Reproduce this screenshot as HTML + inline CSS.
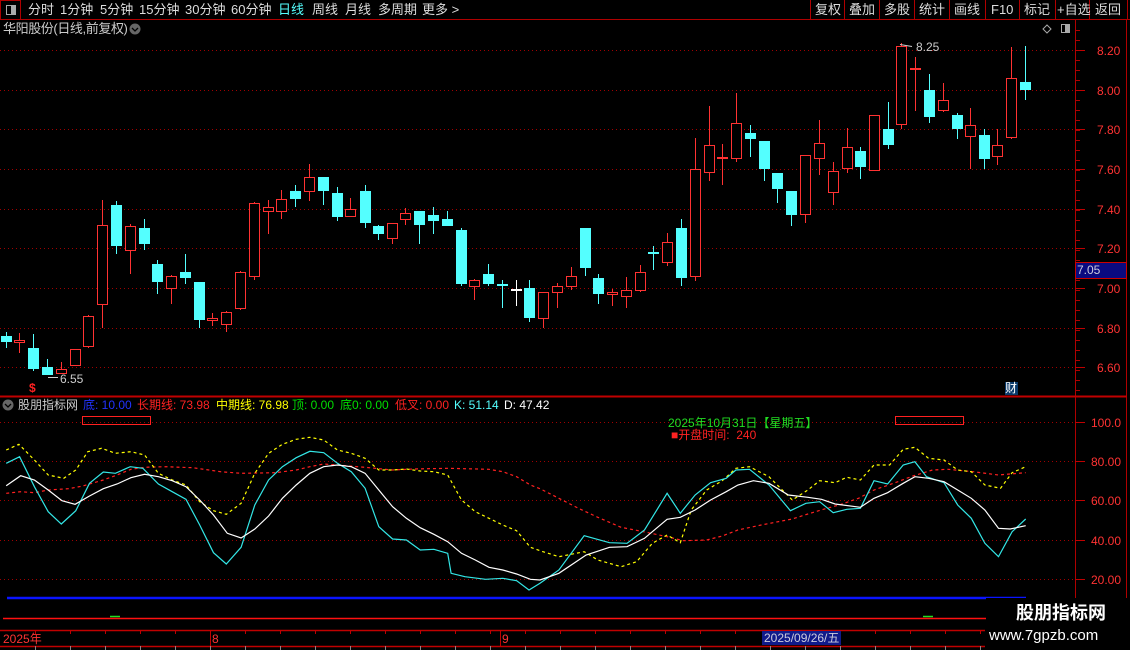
<!DOCTYPE html>
<html><head><meta charset="utf-8">
<style>
html,body{margin:0;padding:0;background:#000;width:1130px;height:650px;overflow:hidden}
body{font-family:"Liberation Sans","Noto Sans CJK SC",sans-serif;position:relative}
.t{position:absolute;white-space:nowrap;font-size:13px;line-height:14px}
svg{position:absolute;left:0;top:0}
</style></head><body>
<svg id="s" width="1130" height="650" xmlns="http://www.w3.org/2000/svg"></svg>

<div class="t" style="left:28px;top:3px;color:#ddd">分时</div>
<div class="t" style="left:60px;top:3px;color:#ddd">1分钟</div>
<div class="t" style="left:100px;top:3px;color:#ddd">5分钟</div>
<div class="t" style="left:139px;top:3px;color:#ddd">15分钟</div>
<div class="t" style="left:185px;top:3px;color:#ddd">30分钟</div>
<div class="t" style="left:231px;top:3px;color:#ddd">60分钟</div>
<div class="t" style="left:278px;top:3px;color:#55ffff">日线</div>
<div class="t" style="left:312px;top:3px;color:#ddd">周线</div>
<div class="t" style="left:345px;top:3px;color:#ddd">月线</div>
<div class="t" style="left:378px;top:3px;color:#ddd">多周期</div>
<div class="t" style="left:422px;top:3px;color:#ddd">更多 &gt;</div>
<div class="t" style="left:815px;top:3px;color:#ddd">复权</div>
<div class="t" style="left:849px;top:3px;color:#ddd">叠加</div>
<div class="t" style="left:884px;top:3px;color:#ddd">多股</div>
<div class="t" style="left:919px;top:3px;color:#ddd">统计</div>
<div class="t" style="left:954px;top:3px;color:#ddd">画线</div>
<div class="t" style="left:991px;top:3px;color:#ddd">F10</div>
<div class="t" style="left:1024px;top:3px;color:#ddd">标记</div>
<div class="t" style="left:1057px;top:3px;color:#ddd">+自选</div>
<div class="t" style="left:1095px;top:3px;color:#ddd">返回</div>
<div class="t" style="left:3px;top:22px;color:#ccc;letter-spacing:-0.4px">华阳股份(日线,前复权)</div>

<div class="t" style="left:1097px;top:44px;color:#ff3333;font-size:12px">8.20</div>
<div class="t" style="left:1097px;top:84px;color:#ff3333;font-size:12px">8.00</div>
<div class="t" style="left:1097px;top:123px;color:#ff3333;font-size:12px">7.80</div>
<div class="t" style="left:1097px;top:163px;color:#ff3333;font-size:12px">7.60</div>
<div class="t" style="left:1097px;top:203px;color:#ff3333;font-size:12px">7.40</div>
<div class="t" style="left:1097px;top:242px;color:#ff3333;font-size:12px">7.20</div>
<div class="t" style="left:1097px;top:282px;color:#ff3333;font-size:12px">7.00</div>
<div class="t" style="left:1097px;top:322px;color:#ff3333;font-size:12px">6.80</div>
<div class="t" style="left:1097px;top:361px;color:#ff3333;font-size:12px">6.60</div>
<div class="t" style="left:1077px;top:263px;color:#ccd;font-size:12px">7.05</div>
<div class="t" style="left:60px;top:372px;color:#ccc;font-size:12px">6.55</div>
<div class="t" style="left:916px;top:40px;color:#ccc;font-size:12px">8.25</div>
<div class="t" style="left:29px;top:381px;color:#ff2222;font-size:12px;font-weight:bold">$</div>
<div class="t" style="left:1005px;top:382px;color:#fff;font-size:12px;background:#0a3a6a;width:13px;height:13px;line-height:13px">财</div>

<div class="t" style="left:18px;top:398px;color:#ccc;font-size:12px">股朋指标网</div>
<div class="t" style="left:83px;top:398px;color:#2233ff;font-size:12px">底: 10.00</div>
<div class="t" style="left:137px;top:398px;color:#ff2222;font-size:12px">长期线: 73.98</div>
<div class="t" style="left:216px;top:398px;color:#ffff00;font-size:12px">中期线: 76.98</div>
<div class="t" style="left:292px;top:398px;color:#00dd00;font-size:12px">顶: 0.00</div>
<div class="t" style="left:340px;top:398px;color:#00dd00;font-size:12px">底0: 0.00</div>
<div class="t" style="left:395px;top:398px;color:#ff2222;font-size:12px">低叉: 0.00</div>
<div class="t" style="left:454px;top:398px;color:#55ffff;font-size:12px">K: 51.14</div>
<div class="t" style="left:504px;top:398px;color:#fff;font-size:12px">D: 47.42</div>
<div class="t" style="left:668px;top:416px;color:#22dd22;font-size:12px">2025年10月31日【星期五】</div>
<div class="t" style="left:671px;top:428px;color:#ff2222;font-size:12px">■开盘时间:&nbsp;&nbsp;240</div>
<div class="t" style="left:1091px;top:416px;color:#ff3333;font-size:12px">100.0</div>
<div class="t" style="left:1091px;top:455px;color:#ff3333;font-size:12px">80.00</div>
<div class="t" style="left:1091px;top:494px;color:#ff3333;font-size:12px">60.00</div>
<div class="t" style="left:1091px;top:534px;color:#ff3333;font-size:12px">40.00</div>
<div class="t" style="left:1091px;top:573px;color:#ff3333;font-size:12px">20.00</div>

<div class="t" style="left:3px;top:632px;color:#ff3333;font-size:12px">2025年</div>
<div class="t" style="left:212px;top:632px;color:#ff3333;font-size:12px">8</div>
<div class="t" style="left:502px;top:632px;color:#ff3333;font-size:12px">9</div>
<div class="t" style="left:762px;top:631px;color:#ccd;font-size:12px;background:#101a8a;padding:0 2px">2025/09/26/五</div>

<div style="position:absolute;left:986px;top:598px;width:144px;height:52px;background:#000"></div>
<div class="t" style="left:1016px;top:603px;color:#fff;font-size:18px;line-height:20px;font-weight:bold">股朋指标网</div>
<div class="t" style="left:989px;top:627px;color:#fff;font-size:15px;line-height:17px">www.7gpzb.com</div>

<script>
var s=document.getElementById('s');var h='';
function L(x1,y1,x2,y2,c,w,d){h+='<line x1="'+x1+'" y1="'+y1+'" x2="'+x2+'" y2="'+y2+'" stroke="'+c+'" stroke-width="'+(w||1)+'"'+(d?' stroke-dasharray="'+d+'"':'')+'/>';}
function R(x,y,w,hh,f,st){h+='<rect x="'+x+'" y="'+y+'" width="'+w+'" height="'+hh+'" fill="'+f+'" stroke="'+(st||'none')+'"/>';}
L(0,19.5,1130,19.5,'#b00000');
R(0.5,0.5,20,19,'none','#b00000');R(6.5,5.5,9,9,'none','#aaa');R(11,6,4,8,'#aaa');
[810,844,879,914,949,985,1019,1055,1089,1127].forEach(function(x){L(x+.5,0,x+.5,20,'#b00000');});
h+='<circle cx="135" cy="29" r="5.5" fill="#666"/><path d="M132 28 L135 31 L138 28" stroke="#000" fill="none" stroke-width="1.3"/>';
h+='<path d="M1047 25 L1051 29 L1047 33 L1043 29Z" stroke="#aaa" fill="none"/>';R(1061.5,24.5,8,8,'none','#aaa');R(1065,25,4,7,'#aaa');
L(1075.5,20,1075.5,650,'#b00000');L(1126.5,20,1126.5,650,'#b00000');
L(0,396.5,1127,396.5,'#c00000',2);
for(var y=30;y<396;y+=10){L(1075,y+.5,1080,y+.5,'#b00000');}
[50,90,129,169,209,248,288,328,367].forEach(function(y){L(0,y+.5,1075,y+.5,'#a00000',1,'1 3');L(1075,y+.5,1085,y+.5,'#c00000');});
[422,461,500,540,579].forEach(function(y){L(0,y+.5,1075,y+.5,'#a00000',1,'1 3');L(1075,y+.5,1085,y+.5,'#c00000');});
R(1075.5,262.5,51,16,'#0a0a80','#cc0000');
var c=[[6,'c',336,342,332,348],[19,'r',340,343,333,353],[33,'c',348,369,334,371],[47,'c',367,375,359,375],[61,'r',369,374,362,374],[75,'r',349,366,349,366],[88,'r',316,347,315,348],[102,'r',225,305,200,328],[116,'c',205,246,201,254],[130,'r',226,251,224,274],[144,'c',228,244,219,250],[157,'c',264,282,260,294],[171,'r',276,289,275,304],[185,'c',272,278,254,284],[199,'c',282,320,282,328],[212,'r',318,321,313,326],[226,'r',312,325,311,332],[240,'r',272,309,271,310],[254,'r',203,277,202,280],[268,'r',207,212,200,234],[281,'r',199,212,190,219],[295,'c',191,199,185,207],[309,'r',177,192,164,201],[323,'c',177,191,177,205],[337,'c',193,217,187,221],[350,'r',209,217,198,217],[365,'c',191,223,185,228],[378,'c',226,234,225,240],[392,'r',223,239,223,244],[405,'r',213,220,208,225],[419,'c',211,225,211,244],[433,'c',215,221,207,234],[447,'c',219,226,211,226],[461,'c',230,284,228,286],[474,'r',280,287,279,300],[488,'c',274,284,264,286],[502,'c',284,286,280,308],[516,'w',289,291,280,306],[529,'c',288,318,280,322],[543,'r',292,319,292,328],[557,'r',286,293,283,308],[571,'r',276,287,267,290],[585,'c',228,268,228,276],[598,'c',278,294,274,304],[612,'r',292,295,289,306],[626,'r',290,297,277,308],[640,'r',272,291,265,292],[653,'c',252,254,246,270],[667,'r',242,263,233,266],[681,'c',228,278,219,286],[695,'r',169,277,138,281],[709,'r',145,173,106,181],[722,'r',157,159,144,185],[736,'r',123,159,93,162],[750,'c',133,139,125,157],[764,'c',141,169,141,181],[777,'c',173,189,173,203],[791,'c',191,215,191,226],[805,'r',155,215,155,223],[819,'r',143,159,120,175],[833,'r',171,193,162,205],[847,'r',147,169,128,173],[860,'c',151,167,147,179],[874,'r',115,171,115,171],[888,'c',129,145,102,149],[901,'r',46,125,43,129],[915,'r',68,70,57,111],[929,'c',90,117,74,123],[943,'r',100,111,83,112],[957,'c',115,129,113,139],[970,'r',125,137,108,169],[984,'c',135,159,129,169],[997,'r',145,157,129,165],[1011,'r',78,138,47,139],[1025,'c',82,90,46,100]];
c.forEach(function(k){var x=k[0],col=k[1]=='r'?'#ff3232':(k[1]=='c'?'#54ffff':'#ffffff');
 L(x+.5,k[4],x+.5,k[5],col);
 if(k[1]=='r'){R(x-4.5,k[2]+.5,10,Math.max(1,k[3]-k[2]-1),'#000',col);}
 else R(x-5,k[2],11,Math.max(2,k[3]-k[2]),col);
});
L(48,377.5,58,377.5,'#ccc');L(900,44.5,912,46.5,'#ccc');
function P(a,b,col,d){var pts=[];a.forEach(function(p){pts.push((p[0]*540/1568).toFixed(1)+','+(410+p[1]/3).toFixed(1));});
 b.forEach(function(p){var x=520+p[0]*610/1568;if(x>540)pts.push(x.toFixed(1)+','+(410+p[1]/3).toFixed(1));});
 h+='<polyline points="'+pts.join(' ')+'" fill="none" stroke="'+col+'" stroke-width="1.2"'+(d?' stroke-dasharray="'+d+'"':'')+'/>';}
P([[18,250],[60,245],[100,248],[140,240],[200,236],[240,228],[300,210],[340,195],[380,178],[420,172],[480,170],[560,173],[640,185],[700,190],[800,188],[860,180],[900,170],[940,162],[980,165],[1060,172],[1140,180],[1200,177],[1300,175],[1420,178],[1460,185],[1500,200],[1540,225],[1568,236]],
 [[50,230],[100,265],[150,295],[200,322],[260,352],[330,368],[378,380],[420,392],[480,390],[520,378],[560,360],[620,345],[700,327],[740,312],[780,298],[820,285],[870,265],[910,240],[960,220],[1010,198],[1060,180],[1100,178],[1165,185],[1230,195],[1260,192],[1300,188]],'#ff2020','3 3');
P([[18,120],[55,103],[100,150],[140,195],[185,205],[220,180],[255,125],[295,115],[335,130],[380,125],[420,135],[460,190],[500,210],[540,225],[580,275],[620,302],[657,313],[700,280],[740,190],[780,130],[820,103],[860,88],[900,82],[940,90],[980,120],[1020,130],[1060,145],[1100,180],[1140,180],[1180,177],[1220,183],[1260,185],[1300,195],[1340,270],[1380,305],[1420,325],[1460,345],[1500,362],[1540,412],[1568,422]],
 [[100,440],[165,425],[200,450],[260,470],[300,455],[340,400],[378,375],[412,398],[440,300],[480,240],[520,212],[555,175],[590,170],[640,200],[700,270],[740,240],[770,212],[810,218],[840,202],[875,210],[910,165],[950,165],[985,118],[1015,112],[1050,145],[1090,150],[1125,180],[1160,185],[1195,225],[1235,235],[1265,188],[1300,170]],'#ffff00','3 3');
P([[18,160],[57,140],[100,230],[140,305],[178,342],[220,302],[260,220],[300,186],[335,190],[378,170],[415,175],[460,222],[500,245],[540,268],[580,345],[620,428],[657,462],[700,412],[740,285],[780,210],[820,170],[860,143],[900,124],[940,128],[980,160],[1020,185],[1060,235],[1100,350],[1140,387],[1180,390],[1220,420],[1260,418],[1300,430],[1310,490],[1350,500],[1410,508],[1460,505],[1500,512],[1536,540],[1568,520]],
 [[100,480],[165,377],[230,398],[275,400],[320,360],[378,250],[412,310],[450,255],[490,218],[530,205],[555,180],[590,178],[640,225],[695,302],[735,280],[770,275],[805,308],[840,298],[875,295],[910,212],[945,222],[985,165],[1015,155],[1045,200],[1090,218],[1125,285],[1160,325],[1195,400],[1230,440],[1265,365],[1300,327]],'#33e6e6');
P([[18,227],[60,197],[100,210],[140,240],[180,272],[218,283],[260,258],[300,236],[340,222],[380,203],[420,193],[460,200],[500,212],[540,230],[580,270],[620,315],[660,370],[700,384],[740,357],[780,318],[820,265],[860,225],[900,190],[940,170],[980,165],[1020,170],[1060,190],[1100,240],[1140,290],[1180,325],[1220,353],[1260,373],[1300,395],[1340,430],[1380,450],[1420,472],[1460,480],[1500,492],[1540,508],[1568,510]],
 [[100,490],[170,435],[230,412],[275,410],[320,385],[378,328],[412,322],[450,300],[490,270],[530,245],[560,225],[600,212],[640,220],[690,255],[740,262],[775,268],[810,282],[875,292],[910,265],[945,248],[985,220],[1015,200],[1050,205],[1090,215],[1125,240],[1160,265],[1195,300],[1230,355],[1260,357],[1300,347]],'#ffffff');
R(82.5,416.5,68,8,'none','#ff2020');R(895.5,416.5,68,8,'none','#ff2020');
h+='<circle cx="8" cy="405" r="5.5" fill="#666"/><path d="M5 404 L8 407 L11 404" stroke="#000" fill="none" stroke-width="1.3"/>';
L(7,598,1026,598,'#0a14ff',2.5);
L(3,618.5,990,618.5,'#ff1010',1.5);
L(110,616.5,120,616.5,'#22dd22',1.5);L(923,616.5,933,616.5,'#22dd22',1.5);
L(0,630.5,985,630.5,'#c00000',1.5);L(0,646.5,985,646.5,'#c00000',1.5);
L(210.5,630,210.5,646,'#c00000');L(500.5,630,500.5,646,'#c00000');
for(var x=35;x<985;x+=35){L(x+.5,630,x+.5,634,'#c00000');L(x+.5,646,x+.5,650,'#888');}
s.innerHTML=h;
</script>
</body></html>
